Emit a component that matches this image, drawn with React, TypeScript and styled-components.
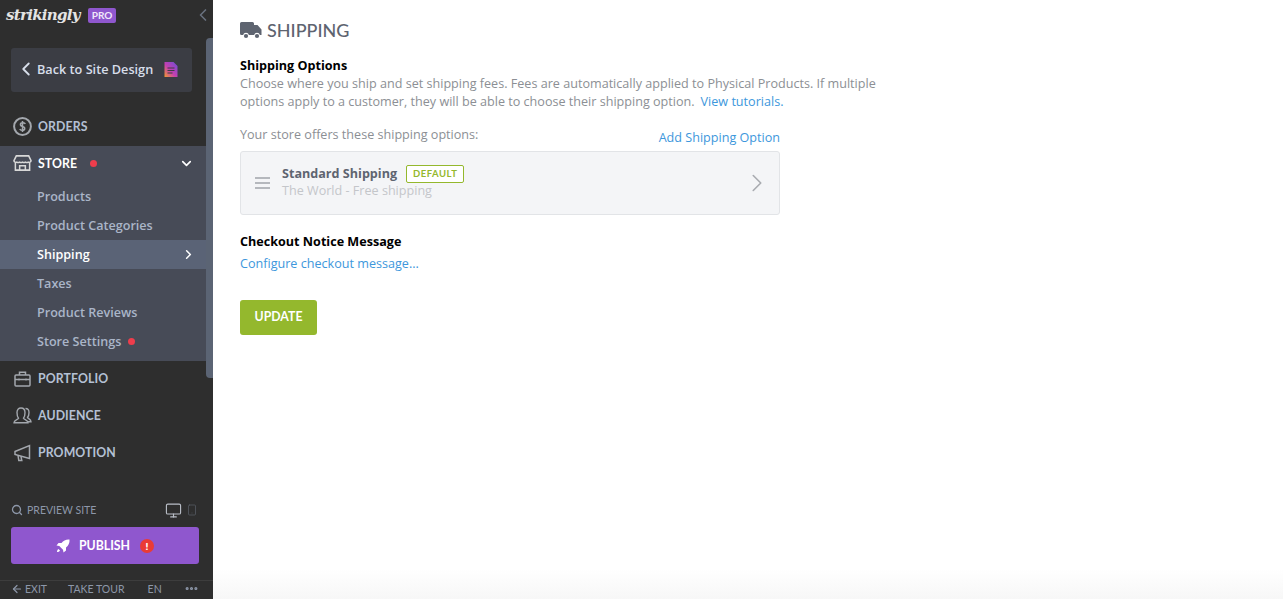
import React from 'react';
import styled, { createGlobalStyle } from 'styled-components';
import { ChevronDown, ChevronLeft, ChevronRight, Monitor, Search, Smartphone, ArrowLeft, Ellipsis } from 'lucide-react';

const GlobalStyle = createGlobalStyle`
  html, body { margin: 0; padding: 0; height: 100%; background: #fff; }
  body { font-family: 'Open Sans', 'Liberation Sans', sans-serif; overflow: hidden; }
  #root { height: 100%; }
  * { box-sizing: border-box; }
`;

const Page = styled.div`
  display: flex;
  width: 1283px;
  height: 599px;
  overflow: hidden;
`;

const Sidebar = styled.aside`
  position: relative;
  flex: 0 0 213px;
  display: flex;
  flex-direction: column;
  background: #2e2e2e;
  color: #fff;
`;

const TopBar = styled.div`
  height: 38px;
  display: flex;
  align-items: center;
  padding: 0 0 8px 6px;
  color: #69717f;
`;

const Logo = styled.span`
  font-family: 'DejaVu Serif', serif;
  font-style: italic;
  font-weight: 700;
  font-size: 15px;
  letter-spacing: -0.7px;
  color: #e4e4e4;
  width: 82px;
`;

const ProBadge = styled.span`
  width: 28px;
  height: 15px;
  border-radius: 2px;
  background: #8f57ce;
  color: #f1e8fa;
  font: 700 10px/15px Lato, sans-serif;
  text-align: center;
`;

const Collapse = styled.span`
  margin-left: auto;
  display: flex;
`;

const ScrollThumb = styled.div`
  position: absolute;
  top: 38px;
  right: 0;
  width: 7px;
  height: 340px;
  border-radius: 4px 0 0 4px;
  background: #5b6474;
`;

const BackButton = styled.div`
  display: flex;
  align-items: center;
  width: 181px;
  height: 44px;
  margin: 10px 0 0 11px;
  padding: 0 0 2px 4px;
  border-radius: 3px;
  background: #3b3d44;
  color: #d7deea;
  font-size: 12.7px;
  font-weight: 600;
`;

const PageIconSlot = styled.span`
  display: flex;
  margin-left: 11px;
`;

const Nav = styled.nav`
  width: 206px;
  margin-top: 16px;
`;

const NavItem = styled.div`
  display: flex;
  align-items: center;
  height: 37px;
  padding: 0 0 2px 13px;
  gap: 6px;
  font-family: Lato, sans-serif;
  font-weight: 700;
  font-size: 12.3px;
  letter-spacing: 0.1px;
  color: #b4c0d4;
`;

const OrdersItem = styled(NavItem)`
  height: 38px;
`;

const IconSlot = styled.span`
  display: flex;
  width: 19px;
  justify-content: center;
`;

const StoreSection = styled.div`
  background: #474b57;
  height: 215px;
`;

const StoreHeader = styled(NavItem)`
  height: 34px;
  padding: 0 12px 0 13px;
  color: #fff;
`;

const SubList = styled.div`
  padding-top: 2px;
`;

const SubItem = styled.div<{ $active?: boolean }>`
  display: flex;
  align-items: center;
  height: 29px;
  padding: 0 10px 0 37px;
  font-size: 12.6px;
  font-weight: 600;
  color: ${p => (p.$active ? '#fff' : '#aab5c8')};
  background: ${p => (p.$active ? '#5a6376' : 'transparent')};
`;

const RedDot = styled.span`
  width: 7px;
  height: 7px;
  margin-left: 7px;
  border-radius: 50%;
  background: #ee3d4c;
`;

const PushRight = styled.span`
  margin-left: auto;
  display: flex;
`;

const BottomArea = styled.div`
  margin-top: auto;
`;

const PreviewRow = styled.div`
  display: flex;
  align-items: center;
  padding: 0 15px 0 11px;
  height: 20px;
  gap: 4px;
  font-family: Lato, sans-serif;
  font-size: 10.5px;
  color: #8d97a9;
`;

const PublishButton = styled.div`
  display: flex;
  align-items: center;
  justify-content: center;
  gap: 9px;
  width: 188px;
  height: 37px;
  margin: 7px 0 16px 11px;
  border-radius: 3px;
  background: #8f57ce;
  color: #fff;
  font: 700 12.3px Lato, sans-serif;
`;

const Alert = styled.span`
  width: 14px;
  height: 14px;
  margin-left: 1px;
  border-radius: 50%;
  background: #ea3b36;
  color: #fff;
  font: 800 10px/14px Lato, sans-serif;
  text-align: center;
`;

const Footer = styled.div`
  display: flex;
  align-items: center;
  height: 19px;
  padding: 0 14px 3px 11px;
  border-top: 1px solid #3d3d3d;
  font-family: Lato, sans-serif;
  font-size: 10.5px;
  color: #8d97a9;
`;

const FooterItem = styled.span<{ $left: number }>`
  display: flex;
  align-items: center;
  gap: 2px;
  margin-left: ${p => p.$left}px;
`;

const Main = styled.main`
  position: relative;
  flex: 1;
  padding: 19px 0 0 27px;
`;

const FadeBottom = styled.div`
  position: absolute;
  left: 0;
  right: 0;
  bottom: 0;
  height: 30px;
  background: linear-gradient(to bottom, #fff, #f7f7f7);
`;

const Title = styled.h1`
  display: flex;
  align-items: center;
  gap: 5px;
  height: 22px;
  margin: 0;
  font-family: Lato, sans-serif;
  font-weight: 500;
  font-size: 18px;
  color: #5e6470;
`;

const SectionLabel = styled.div`
  font-size: 12.6px;
  font-weight: 700;
  line-height: 18px;
  color: #000;
`;

const Options = styled.div`
  margin-top: 16px;
`;

const HelpLine = styled.div`
  display: flex;
  gap: 6px;
  font-size: 12.6px;
  line-height: 18px;
  color: #8c8f94;
`;

const TextLink = styled.a`
  color: #3d97dc;
  font-size: 12.6px;
`;

const ListHeader = styled.div`
  display: flex;
  justify-content: space-between;
  align-items: flex-end;
  width: 540px;
  margin-top: 15px;
  font-size: 12.6px;
  color: #8c8f94;
  line-height: 18px;
`;

const ListHeaderLink = styled(TextLink)`
  position: relative;
  top: 3px;
`;

const OptionCard = styled.div`
  display: flex;
  align-items: center;
  width: 540px;
  height: 64px;
  margin-top: 7px;
  padding: 0 7px 0 14px;
  border: 1px solid #e2e4e7;
  border-radius: 3px;
  background: #f4f5f7;
`;

const Grip = styled.span`
  display: flex;
  flex-direction: column;
  gap: 3px;
  width: 15px;
  margin-right: 12px;
`;

const GripBar = styled.span`
  height: 2px;
  background: #b5b8bd;
`;

const OptionText = styled.div`
  margin-bottom: 3px;
`;

const OptionName = styled.div`
  display: flex;
  align-items: center;
  gap: 9px;
  height: 18px;
  font-size: 12.6px;
  font-weight: 700;
  color: #5e6470;
`;

const Tag = styled.span`
  height: 18px;
  padding: 0 6px;
  border: 1px solid #94b82d;
  border-radius: 2px;
  font: 700 9.5px/16px Lato, sans-serif;
  letter-spacing: 0.5px;
  color: #94b82d;
  background: #fff;
`;

const OptionSub = styled.div`
  font-size: 12.6px;
  line-height: 16px;
  color: #c4c6ca;
`;

const CheckoutBlock = styled.div`
  margin-top: 18px;
`;

const ConfigLink = styled(TextLink)`
  display: block;
  margin-top: 4px;
  line-height: 18px;
`;

const UpdateButton = styled.button`
  display: block;
  width: 77px;
  height: 35px;
  margin-top: 27px;
  padding: 0 0 2px;
  border: none;
  border-radius: 3px;
  background: #94b82d;
  color: #fff;
  font: 700 12.3px Lato, sans-serif;
`;

const StoreIcon = () => (
  <svg width="20" height="18" viewBox="0 0 20 18" fill="none" stroke="#d8d8d8" strokeWidth="1.6">
    <path d="M3.5 1.5h13l2.5 5a2 2 0 0 1-3 1.600 2.800 2.800 0 0 1-3 0 2.800 2.800 0 0 1-3 0 2.800 2.800 0 0 1-3 0 2.800 2.800 0 0 1-3 0A2 2 0 0 1 1 6.500z" />
    <path d="M2.500 9v7.500h15V9M7 16.500V12h6v4.500" />
  </svg>
);

const DollarIcon = () => (
  <svg width="19" height="19" viewBox="0 0 19 19" fill="none" stroke="#a3a7ad" strokeWidth="2">
    <circle cx="9.500" cy="9.500" r="8.400" />
    <path d="M12.300 7a2.300 2 0 0 0-2.500-1.300c-3 0-3.200 3.200-.3 3.800 3 .6 2.900 3.800-.1 3.800A2.400 2 0 0 1 6.800 12M9.500 4v11" strokeWidth="1.500" />
  </svg>
);

const BriefcaseIcon = () => (
  <svg width="17" height="16" viewBox="0 0 17 16" fill="none" stroke="#a3a7ad" strokeWidth="1.500">
    <rect x="1" y="4" width="15" height="11" rx="1" />
    <path d="M5.500 4V1.200h6V4M1 8.500h15M5 7.500v2M12 7.500v2" />
  </svg>
);

const AudienceIcon = () => (
  <svg width="19" height="17" viewBox="0 0 19 17" fill="none" stroke="#a3a7ad" strokeWidth="1.400">
    <path d="M1 15.800c0-3 4-3 4.500-4.500C4 9.500 4 7.500 4 5.500 4 2.500 5.500 1 8 1s4 1.500 4 4.500c0 2 0 4-1.500 5.800.5 1.500 4.500 1.500 4.500 4.500z" />
    <path d="M12.500 1.500c2 0 3.500 1.500 3.500 4 0 2-.5 4-1.500 5 .5 1.200 3.500 1.500 3.500 4.300h-3" />
  </svg>
);

const MegaphoneIcon = () => (
  <svg width="17" height="18" viewBox="0 0 17 18" fill="none" stroke="#a3a7ad" strokeWidth="1.500">
    <path d="M1 7.500 15.500 1.500v13L1 10.500zM4 11.500l.8 5h3l-.8-3.800" />
  </svg>
);

const TruckIcon = () => (
  <svg width="22" height="17" viewBox="0 0 22 17" fill="#5e6470">
    <path d="M1.500 0h11A1.500 1.500 0 0 1 14 1.500V3h3.500l4 4.500V13h-1.600a3 3 0 0 0-5.800 0H8.900a3 3 0 0 0-5.800 0H1.500A1.500 1.500 0 0 1 0 11.500v-10A1.500 1.500 0 0 1 1.500 0z" />
    <circle cx="6" cy="14" r="2.100" />
    <circle cx="17" cy="14" r="2.100" />
  </svg>
);

const RocketIcon = () => (
  <svg width="14" height="14" viewBox="0 0 14 14" fill="#fff">
    <path d="M13.500.5c-3.500-.3-6 1-8 3.500H2.500L.5 6.500l2.800.5 3.700 3.700.5 2.800 2.500-2V8.500c2.500-2 3.800-4.500 3.500-8zM2.500 10c-1 .5-1.500 2-1.500 3 1 0 2.500-.5 3-1.500z" />
  </svg>
);

const PageIcon = () => (
  <svg width="14" height="15" viewBox="0 0 13 15">
    <defs>
      <linearGradient id="page" x1="0" y1="1" x2="1" y2="0">
        <stop offset="0" stopColor="#f29a2e" />
        <stop offset="0.45" stopColor="#c43fb0" />
        <stop offset="1" stopColor="#6b4fd8" />
      </linearGradient>
    </defs>
    <path d="M0 0h9l4 4v11H0z" fill="url(#page)" />
    <path d="M3 6h7M3 8.500h7M3 11h5" stroke="#3b3d44" strokeWidth="1" />
  </svg>
);

const storeLinks = ['Products', 'Product Categories', 'Shipping', 'Taxes', 'Product Reviews', 'Store Settings'];

export default function App() {
  return (
    <Page>
      <GlobalStyle />
      <Sidebar>
        <TopBar>
          <Logo>strikingly</Logo>
          <ProBadge>PRO</ProBadge>
          <Collapse><ChevronLeft size={20} strokeWidth={2} /></Collapse>
        </TopBar>
        <ScrollThumb />
        <BackButton>
          <ChevronLeft size={22} strokeWidth={2} />
          <span>Back to Site Design</span>
          <PageIconSlot><PageIcon /></PageIconSlot>
        </BackButton>
        <Nav>
          <OrdersItem><IconSlot><DollarIcon /></IconSlot>ORDERS</OrdersItem>
          <StoreSection>
            <StoreHeader>
              <IconSlot><StoreIcon /></IconSlot>STORE<RedDot />
              <PushRight><ChevronDown size={15} strokeWidth={2.6} /></PushRight>
            </StoreHeader>
            <SubList>
              {storeLinks.map(link => (
                <SubItem key={link} $active={link === 'Shipping'}>
                  {link}
                  {link === 'Store Settings' && <RedDot />}
                  {link === 'Shipping' && <PushRight><ChevronRight size={15} strokeWidth={2.4} /></PushRight>}
                </SubItem>
              ))}
            </SubList>
          </StoreSection>
          <NavItem><IconSlot><BriefcaseIcon /></IconSlot>PORTFOLIO</NavItem>
          <NavItem><IconSlot><AudienceIcon /></IconSlot>AUDIENCE</NavItem>
          <NavItem><IconSlot><MegaphoneIcon /></IconSlot>PROMOTION</NavItem>
        </Nav>
        <BottomArea>
          <PreviewRow>
            <Search size={12} strokeWidth={2.6} />
            PREVIEW SITE
            <PushRight><Monitor size={17} strokeWidth={1.6} color="#b9bec7" /></PushRight>
            <Smartphone size={12} strokeWidth={1.6} color="#555a63" />
          </PreviewRow>
          <PublishButton><RocketIcon /> PUBLISH <Alert>!</Alert></PublishButton>
          <Footer>
            <FooterItem $left={0}><ArrowLeft size={12} strokeWidth={2.4} />EXIT</FooterItem>
            <FooterItem $left={21}>TAKE TOUR</FooterItem>
            <FooterItem $left={23}>EN</FooterItem>
            <PushRight><Ellipsis size={15} strokeWidth={3} /></PushRight>
          </Footer>
        </BottomArea>
      </Sidebar>
      <Main>
        <Title><TruckIcon />SHIPPING</Title>
        <Options>
          <SectionLabel>Shipping Options</SectionLabel>
          <HelpLine>Choose where you ship and set shipping fees. Fees are automatically applied to Physical Products. If multiple</HelpLine>
          <HelpLine>
            <span>options apply to a customer, they will be able to choose their shipping option.</span>
            <TextLink>View tutorials.</TextLink>
          </HelpLine>
        </Options>
        <ListHeader>
          <span>Your store offers these shipping options:</span>
          <ListHeaderLink>Add Shipping Option</ListHeaderLink>
        </ListHeader>
        <OptionCard>
          <Grip><GripBar /><GripBar /><GripBar /></Grip>
          <OptionText>
            <OptionName>Standard Shipping <Tag>DEFAULT</Tag></OptionName>
            <OptionSub>The World - Free shipping</OptionSub>
          </OptionText>
          <PushRight><ChevronRight size={30} strokeWidth={1.3} color="#a9acb1" /></PushRight>
        </OptionCard>
        <CheckoutBlock>
          <SectionLabel>Checkout Notice Message</SectionLabel>
          <ConfigLink>Configure checkout message...</ConfigLink>
        </CheckoutBlock>
        <UpdateButton>UPDATE</UpdateButton>
        <FadeBottom />
      </Main>
    </Page>
  );
}
